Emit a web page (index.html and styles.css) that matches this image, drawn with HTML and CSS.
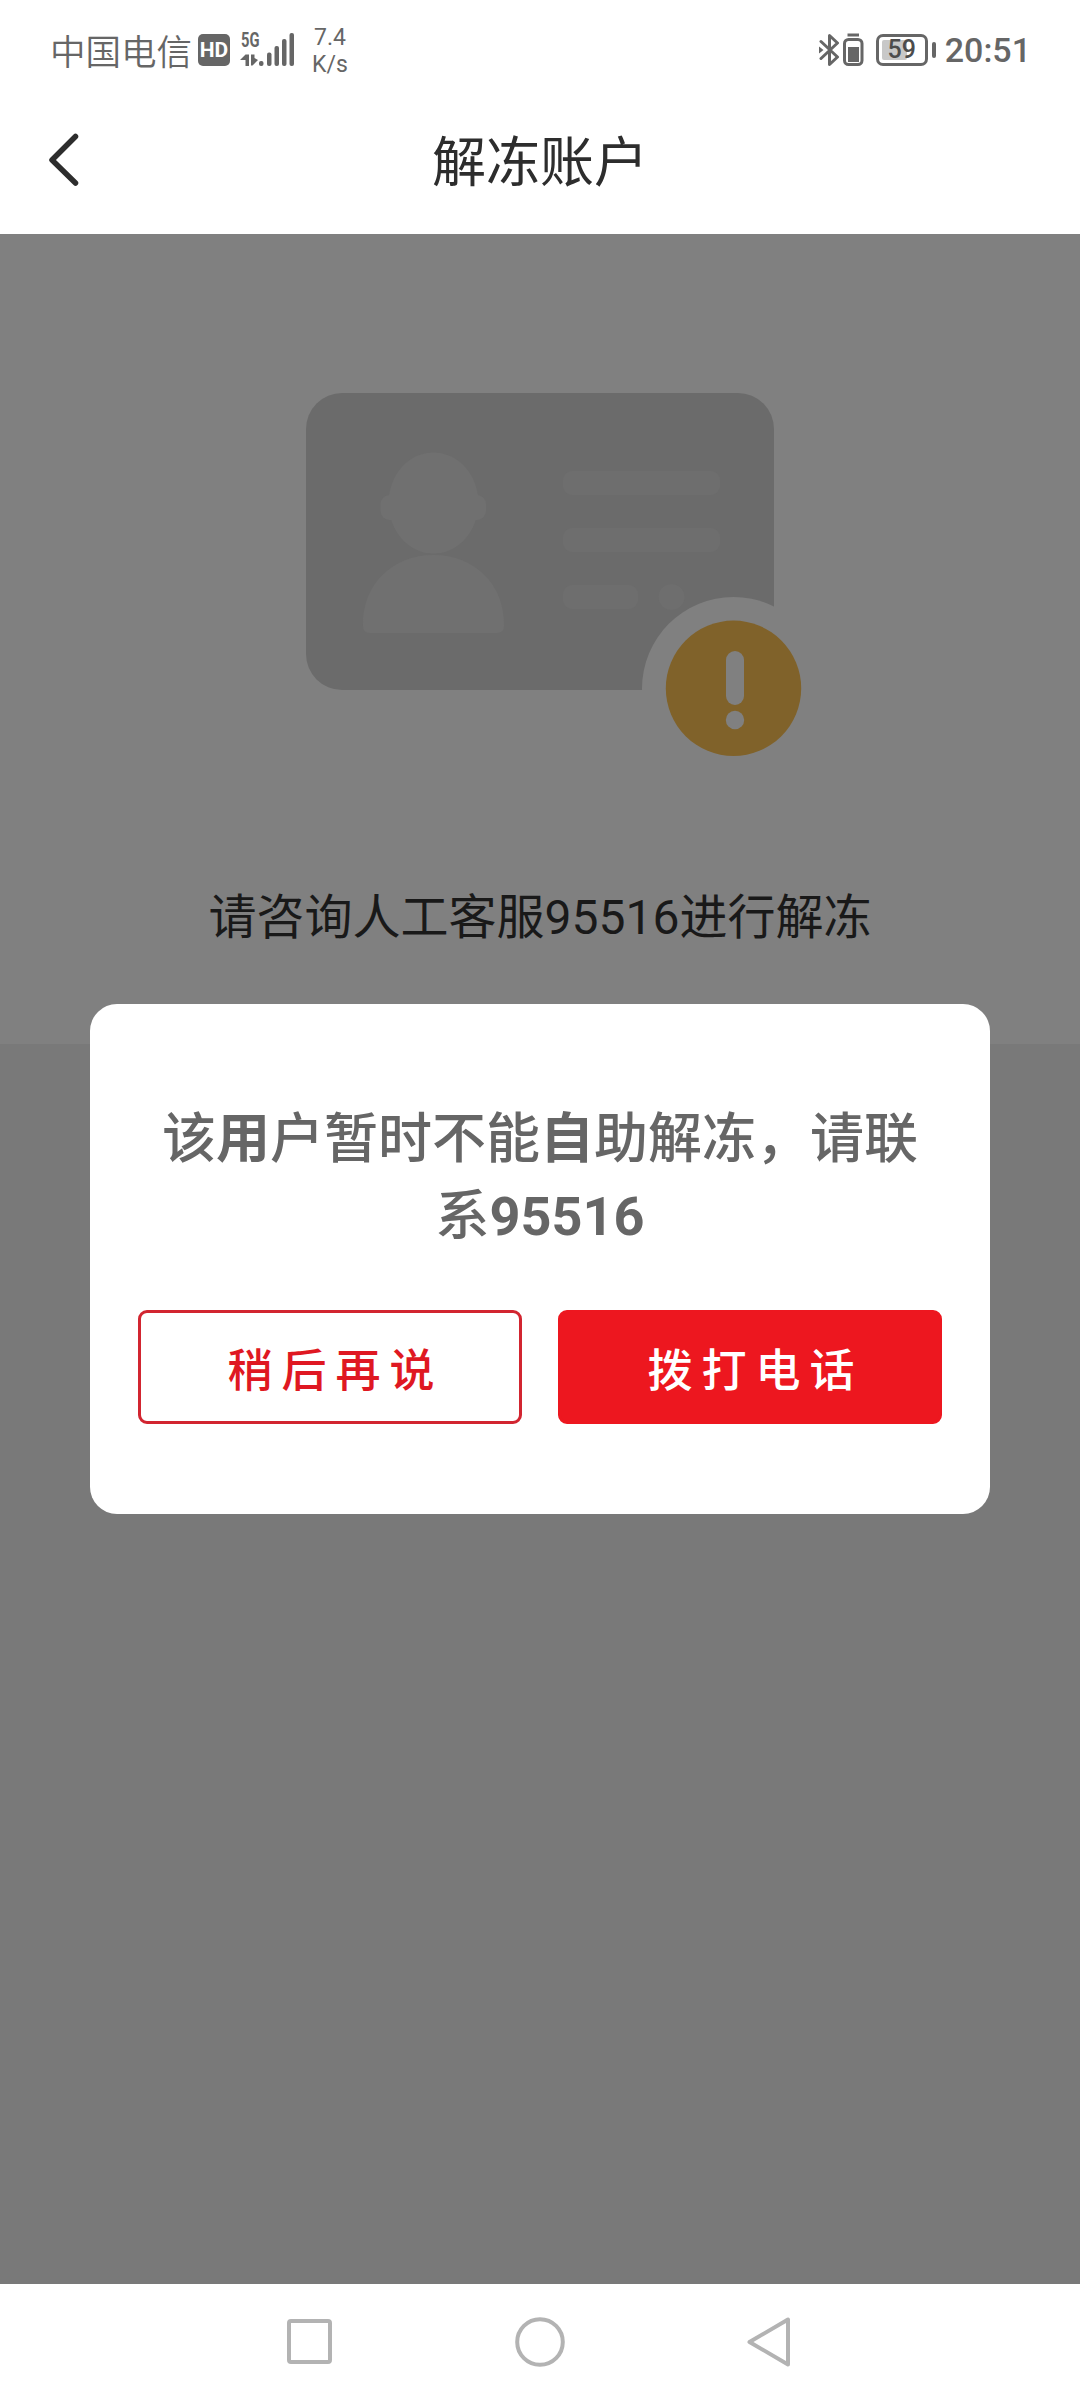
FILE: index.html
```html
<!DOCTYPE html>
<html lang="zh-CN">
<head>
<meta charset="utf-8">
<title>解冻账户</title>
<link rel="stylesheet" href="styles.css">
</head>
<body>
<div class="screen">
  <header class="status">
    <span class="carrier">中国电信</span>
    <span class="hd">HD</span>
    <div class="network">
      <span class="gen">5G</span>
      <svg class="signal" width="54" height="36" viewBox="0 0 54 36" fill="#666">
        <path d="M-1 28L4.500 22.500H8V34H4.500V28zM10 22.500H13.500V26L17 28L11.500 33.500H10z"/>
        <rect x="18" y="29" width="4.500" height="5" rx="2"/>
        <rect x="26" y="20.500" width="4.500" height="13.500" rx="2"/>
        <rect x="33.500" y="14" width="4.500" height="20" rx="2"/>
        <rect x="41" y="7" width="4.500" height="27" rx="2"/>
        <rect x="48.500" y="1" width="4.500" height="33" rx="2"/>
      </svg>
    </div>
    <span class="speed">7.4<br>K/s</span>
    <div class="status-right">
      <svg width="48" height="36" viewBox="0 0 48 36" fill="none" stroke="#666" stroke-width="3">
        <path d="M2 9.500L18.500 25L10.500 32.500V3.500L18.500 11L2 26.500" stroke-linecap="round" stroke-linejoin="round"/>
        <path d="M0 14.500L4.500 18L0 21.500z" fill="#666" stroke="none"/>
        <rect x="25.500" y="7.500" width="17.500" height="25" rx="4"/>
        <rect x="29" y="15" width="11" height="15" fill="#666" stroke="none"/>
        <path d="M28.500 3H40"/>
      </svg>
      <div class="battery"><span class="battery-fill"></span><span class="battery-text">59</span></div>
      <span class="battery-cap"></span>
      <span class="time">20:51</span>
    </div>
  </header>
  <nav class="titlebar">
    <svg class="back" width="36" height="60" viewBox="0 0 36 60" fill="none" stroke="#2d2d2d" stroke-width="5.500" stroke-linecap="round" stroke-linejoin="round"><path d="M30.500 6.500L7 30L30.500 53"/></svg>
    <h1>解冻账户</h1>
  </nav>
  <main class="page">
    <section class="notice">
      <svg class="card" width="500" height="366" viewBox="304 392 500 366">
        <rect x="306" y="393" width="468" height="297" rx="36" fill="#6b6b6b"/>
        <g fill="#707070">
          <ellipse cx="433.500" cy="503" rx="45" ry="50.500"/>
          <rect x="380.500" y="495" width="105.500" height="25" rx="9"/>
          <path d="M363 626C362 585 392 555 433.500 555S505 585 504 626Q504 633 497 633H370Q363 633 363 626z"/>
        </g>
        <g fill="#6e6e6e">
          <rect x="563" y="471" width="157" height="24" rx="9"/>
          <rect x="563" y="528" width="157" height="24" rx="9"/>
          <rect x="563" y="585" width="75" height="24" rx="9"/>
          <circle cx="671.500" cy="597" r="13"/>
        </g>
        <circle cx="733.500" cy="688.500" r="91.500" fill="#808080"/>
        <circle cx="733.500" cy="688.300" r="67.700" fill="#80622a"/>
        <rect x="726" y="651" width="18" height="54" rx="9" fill="#808080"/>
        <circle cx="735" cy="720" r="9.200" fill="#808080"/>
      </svg>
      <p>请咨询人工客服95516进行解冻</p>
    </section>
    <div class="dialog">
      <p class="message">该<b>用</b>户暂时不能<b>自</b>助解冻，请联<br>系<b>95516</b></p>
      <div class="actions">
        <button class="btn later"><span>稍后再说</span></button>
        <button class="btn call"><span>拨打电话</span></button>
      </div>
    </div>
  </main>
  <footer class="navbar">
    <svg width="54" height="54" viewBox="0 0 54 54"><rect x="6" y="6" width="41" height="41" rx="2"/></svg>
    <svg width="54" height="54" viewBox="0 0 54 54"><circle cx="27" cy="27" r="22.800"/></svg>
    <svg width="54" height="54" viewBox="0 0 54 54"><path d="M6.500 27L45 4.500V49.500z"/></svg>
  </footer>
</div>
</body>
</html>
```

FILE: styles.css
```css
* { box-sizing: border-box; }
body { margin: 0; font-family: Roboto, "Noto Sans CJK SC", sans-serif; }
h1, p { margin: 0; font-weight: 400; }

.screen {
  width: 1080px;
  height: 2400px;
  display: flex;
  flex-direction: column;
  background: #fff;
  overflow: hidden;
}

.status {
  height: 100px;
  padding: 0 49px 0 50px;
  display: flex;
  align-items: center;
  color: #666;
}
.carrier { padding-top: 5px; font-size: 35.5px; line-height: 50px; font-weight: 350; }
.hd {
  width: 32px;
  height: 32px;
  margin-left: 6px;
  border-radius: 5px;
  background: #666;
  color: #fff;
  font-size: 21px;
  font-weight: 700;
  line-height: 33px;
  text-align: center;
}
.network { position: relative; width: 54px; height: 36px; margin-left: 11px; }
.gen {
  position: absolute;
  left: 0;
  top: 0;
  font-size: 21px;
  line-height: 17px;
  font-weight: 700;
  transform: scaleX(.7);
  transform-origin: left;
}
.signal { display: block; overflow: visible; }
.speed { margin-left: 17px; font-size: 23px; line-height: 27px; text-align: center; padding-top: 2px; }
.status-right { display: flex; align-items: center; margin-left: auto; }
.battery {
  position: relative;
  width: 52px;
  height: 32px;
  margin-left: 9px;
  border: 3px solid #666;
  border-radius: 7px;
  font-size: 25px;
  line-height: 25px;
  text-align: center;
}
.battery-fill {
  position: absolute;
  left: 3px;
  top: 3px;
  width: 25px;
  height: 20px;
  background: #c8c8c8;
  border-radius: 2px;
}
.battery-text { position: relative; color: #4c4c4c; font-weight: 500; }
.battery-cap { width: 4px; height: 16px; margin-left: 4px; border-radius: 2px; background: #666; }
.time { margin-left: 9px; font-size: 34px; line-height: 40px; font-weight: 500; }

.titlebar {
  height: 134px;
  display: grid;
  grid-template-columns: 60px 1fr 60px;
  padding: 0 45px 15px;
  align-items: center;
}
.titlebar h1 { padding-top: 9px; font-size: 54px; line-height: 80px; text-align: center; color: #2d2d2d; }

.page {
  height: 2050px;
  background: #797979;
}
.notice {
  height: 810px;
  padding-top: 158px;
  background: #808080;
  display: flex;
  flex-direction: column;
  align-items: center;
}
.card { margin-left: 28px; }
.notice p { margin-top: 125px; font-size: 48px; line-height: 70px; color: #191919; }

.dialog {
  position: relative;
  width: 900px;
  height: 510px;
  margin: -40px auto 0;
  padding: 97px 48px 0;
  border-radius: 27px;
  background: #fff;
}
.message { font-size: 54px; line-height: 77px; font-weight: 500; color: #666; text-align: center; white-space: nowrap; }
.message b { font-weight: 700; }
.actions { display: flex; gap: 36px; margin-top: 55px; }
.btn {
  flex: 1;
  height: 114px;
  padding: 9px 0 0 2px;
  border: 3px solid #ed171f;
  border-radius: 9px;
  font: 500 45px/60px Roboto, "Noto Sans CJK SC", sans-serif;
  letter-spacing: 9px;
}
.btn span { margin-right: -9px; }
.later { background: #fff; color: #df1822; border-color: #d22530; }
.call { background: #ed171f; color: #fff; }

.navbar {
  height: 116px;
  padding: 0 283px;
  display: flex;
  align-items: center;
  justify-content: space-between;
}
.navbar svg { fill: none; stroke: #b3b3b3; stroke-width: 4; stroke-linejoin: round; }
```
